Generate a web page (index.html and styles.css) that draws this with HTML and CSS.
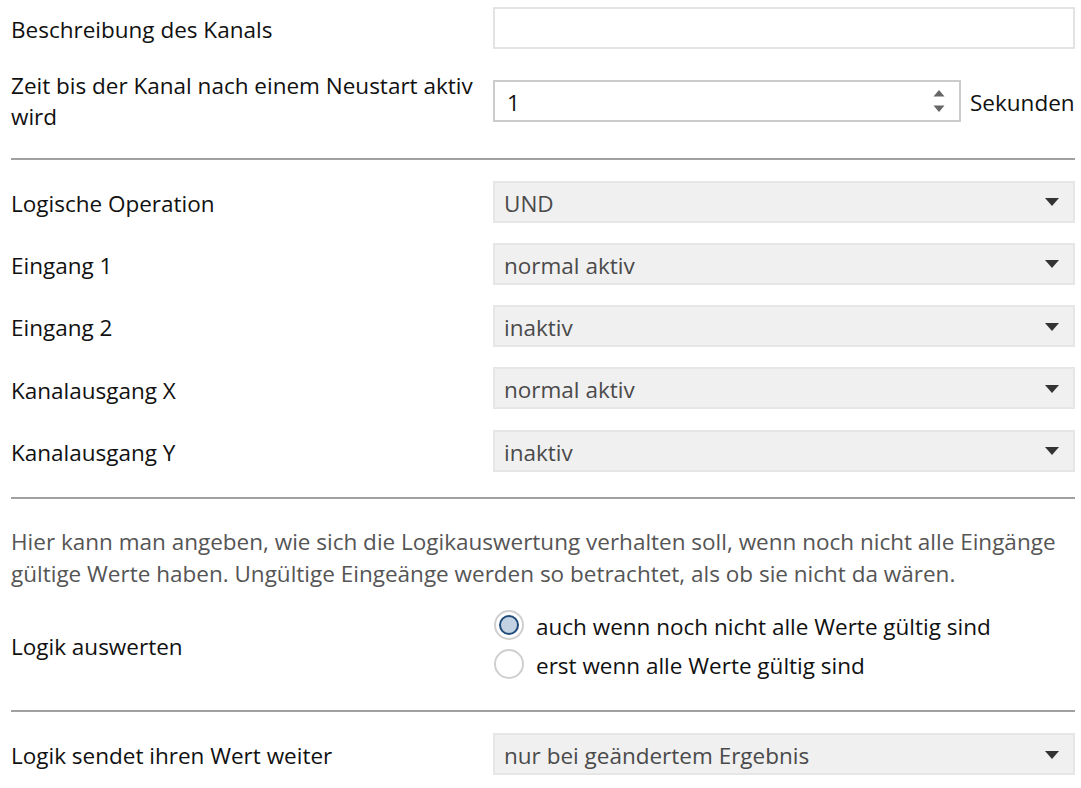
FILE: index.html
```html
<!DOCTYPE html>
<html lang="de">
<head>
<meta charset="utf-8">
<title>Kanal</title>
<link rel="stylesheet" href="styles.css">
</head>
<body>
<div class="page">
  <div class="row row-desc">
    <div class="label">Beschreibung des Kanals</div>
    <div class="control"><div class="textbox"></div></div>
  </div>
  <div class="row row-time">
    <div class="label">Zeit bis der Kanal nach einem Neustart aktiv wird</div>
    <div class="control number-wrap">
      <div class="numbox">
        <span class="numval">1</span>
        <span class="spin">
          <svg width="12" height="24" viewBox="0 0 12 24"><path d="M6 1 L11.5 7.5 L0.5 7.5 Z" fill="#666"/><path d="M0.5 16.5 L11.5 16.5 L6 23 Z" fill="#666"/></svg>
        </span>
      </div>
      <span class="unit">Sekunden</span>
    </div>
  </div>

  <div class="divider div1"></div>

  <div class="selects">
    <div class="row">
      <div class="label">Logische Operation</div>
      <div class="control"><div class="select"><span class="val">UND</span><span class="caret"></span></div></div>
    </div>
    <div class="row">
      <div class="label">Eingang 1</div>
      <div class="control"><div class="select"><span class="val">normal aktiv</span><span class="caret"></span></div></div>
    </div>
    <div class="row">
      <div class="label">Eingang 2</div>
      <div class="control"><div class="select"><span class="val">inaktiv</span><span class="caret"></span></div></div>
    </div>
    <div class="row">
      <div class="label">Kanalausgang X</div>
      <div class="control"><div class="select"><span class="val">normal aktiv</span><span class="caret"></span></div></div>
    </div>
    <div class="row">
      <div class="label">Kanalausgang Y</div>
      <div class="control"><div class="select"><span class="val">inaktiv</span><span class="caret"></span></div></div>
    </div>
  </div>

  <div class="divider div2"></div>

  <p class="note">Hier kann man angeben, wie sich die Logikauswertung verhalten soll, wenn noch nicht alle Eingänge gültige Werte haben. Ungültige Eingeänge werden so betrachtet, als ob sie nicht da wären.</p>

  <div class="row row-radio">
    <div class="label">Logik auswerten</div>
    <div class="control radios">
      <div class="radio-item"><span class="radio checked"></span><span class="rtext">auch wenn noch nicht alle Werte gültig sind</span></div>
      <div class="radio-item"><span class="radio"></span><span class="rtext">erst wenn alle Werte gültig sind</span></div>
    </div>
  </div>

  <div class="divider div3"></div>

  <div class="row row-last">
    <div class="label">Logik sendet ihren Wert weiter</div>
    <div class="control"><div class="select"><span class="val">nur bei geändertem Ergebnis</span><span class="caret"></span></div></div>
  </div>
</div>
</body>
</html>
```
FILE: styles.css
```css
html, body {
  margin: 0;
  padding: 0;
  background: #fff;
}

body {
  font-family: "Open Sans", "Noto Sans", sans-serif;
  font-size: 22.5px;
  color: #111;
}

.page {
  width: 1064px;
  padding: 7px 0 0 11px;
}

.row {
  display: grid;
  grid-template-columns: 482px 582px;
  align-items: center;
}

.label {
  line-height: 31.5px;
  padding-top: 4px;
  padding-right: 2px;
}

.textbox {
  height: 42px;
  box-sizing: border-box;
  border: 2px solid #e3e3e3;
  background: #fff;
}

.row-time {
  margin-top: 20.5px;
}

.row-time .label {
  padding-top: 0;
}

.number-wrap {
  display: flex;
  align-items: center;
  gap: 9px;
}

.numbox {
  width: 468px;
  height: 42px;
  box-sizing: border-box;
  border: 2px solid #cccccc;
  display: flex;
  align-items: center;
  justify-content: space-between;
  padding: 0 14px 0 12px;
}

.numval {
  padding-top: 3px;
}

.unit {
  white-space: nowrap;
  padding-top: 3px;
}

.spin {
  display: flex;
  align-items: center;
}

.spin svg {
  display: block;
}

.divider {
  height: 2px;
  background: #a0a0a0;
}

.div1 {
  margin-top: 25px;
}

.selects {
  margin-top: 21px;
  display: flex;
  flex-direction: column;
  gap: 20.25px;
}

.select {
  height: 42px;
  box-sizing: border-box;
  border: 2px solid #e6e6e6;
  background: #f0f0f0;
  color: #4a4a4a;
  display: flex;
  align-items: center;
  justify-content: space-between;
  padding: 0 14px 0 9px;
}

.val {
  padding-top: 3px;
}

.caret {
  width: 0;
  height: 0;
  border-left: 7px solid transparent;
  border-right: 7px solid transparent;
  border-top: 8px solid #333;
  margin-top: 1px;
}

.div2 {
  margin-top: 25.5px;
}

.note {
  margin: 27px 0 0 0;
  line-height: 32px;
  color: #555;
}

.row-radio {
  margin-top: 15.5px;
}

.radios {
  display: flex;
  flex-direction: column;
}

.radio-item {
  display: flex;
  align-items: center;
  gap: 12px;
  height: 39px;
  padding-left: 1px;
}

.rtext {
  padding-top: 2px;
}

.radio {
  width: 30px;
  height: 30px;
  box-sizing: border-box;
  border: 2px solid #cfcfcf;
  border-radius: 50%;
  background: #fff;
  display: flex;
  align-items: center;
  justify-content: center;
  flex: none;
}

.radio.checked::after {
  content: "";
  width: 20px;
  height: 20px;
  box-sizing: border-box;
  border-radius: 50%;
  border: 2px solid #1f4a7a;
  background: #c3d2e3;
}

.div3 {
  margin-top: 26.5px;
}

.row-last {
  margin-top: 21px;
}
```
